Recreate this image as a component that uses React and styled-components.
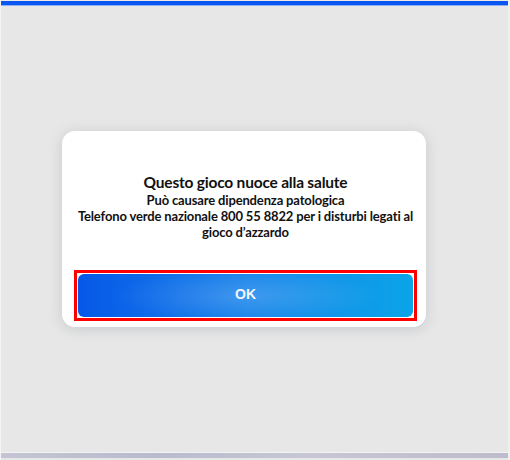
import styled, { createGlobalStyle } from 'styled-components';

const GlobalStyle = createGlobalStyle`
  html, body {
    margin: 0;
    padding: 0;
    background: #e8e8e8;
  }
  * {
    box-sizing: border-box;
  }
`;

const Page = styled.div`
  width: 510px;
  height: 460px;
  display: flex;
  flex-direction: column;
  background: #e7e7e7;
  border-left: 1px solid #f4f4f4;
  border-right: 2px solid #f0f0f0;
  font-family: 'Lato', 'Noto Sans', sans-serif;
`;

const TopBar = styled.div`
  height: 6px;
  border-top: 1px solid #eaeaea;
  background: #0a56f0;
  border-bottom: 1px solid #8fb0f0;
`;

const Stage = styled.main`
  flex: 1;
  display: flex;
  align-items: flex-start;
  padding: 125px 0 0 61px;
`;

const BottomBar = styled.div`
  height: 6px;
  margin-bottom: 2px;
  border-top: 1px solid #f3f3f3;
  background: linear-gradient(to right, #c4c4d4, #b8bccc 30%, #c6c6d6 60%, #bcbccc);
`;

const Card = styled.section`
  width: 364px;
  height: 196px;
  display: flex;
  flex-direction: column;
  padding: 0 9px 6px 12px;
  background: #fff;
  border-radius: 13px;
  box-shadow: 0 2px 14px rgba(60, 70, 90, 0.18);
`;

const Message = styled.div`
  flex: 1;
  display: flex;
  flex-direction: column;
  align-items: center;
  padding-top: 42px;
  color: #111;
  text-align: center;
`;

const Title = styled.h2`
  margin: 0;
  font-size: 15.5px;
  font-weight: 700;
  line-height: 19px;
  letter-spacing: -0.2px;
`;

const Line = styled.p`
  margin: 0;
  font-size: 13px;
  font-weight: 700;
  line-height: 16px;
  letter-spacing: -0.15px;
`;

const Focus = styled.div`
  padding: 1px;
  border: 3px solid #ff0000;
`;

const OkButton = styled.button`
  width: 100%;
  height: 43px;
  border: none;
  border-radius: 6px;
  background:
    radial-gradient(ellipse 40% 60% at 50% 50%, rgba(255, 255, 255, 0.16), transparent),
    linear-gradient(to right, #0558e8, #1a84ea 50%, #0aa4e8);
  color: #f2f6ff;
  font-family: 'Liberation Sans', Arial, sans-serif;
  font-size: 14px;
  font-weight: 700;
  padding-bottom: 4px;
  cursor: pointer;
`;

export default function App() {
  return (
    <>
      <GlobalStyle />
      <Page>
        <TopBar />
        <Stage>
          <Card>
            <Message>
              <Title>Questo gioco nuoce alla salute</Title>
              <Line>Può causare dipendenza patologica</Line>
              <Line>Telefono verde nazionale 800 55 8822 per i disturbi legati al gioco d’azzardo</Line>
            </Message>
            <Focus>
              <OkButton>OK</OkButton>
            </Focus>
          </Card>
        </Stage>
        <BottomBar />
      </Page>
    </>
  );
}
